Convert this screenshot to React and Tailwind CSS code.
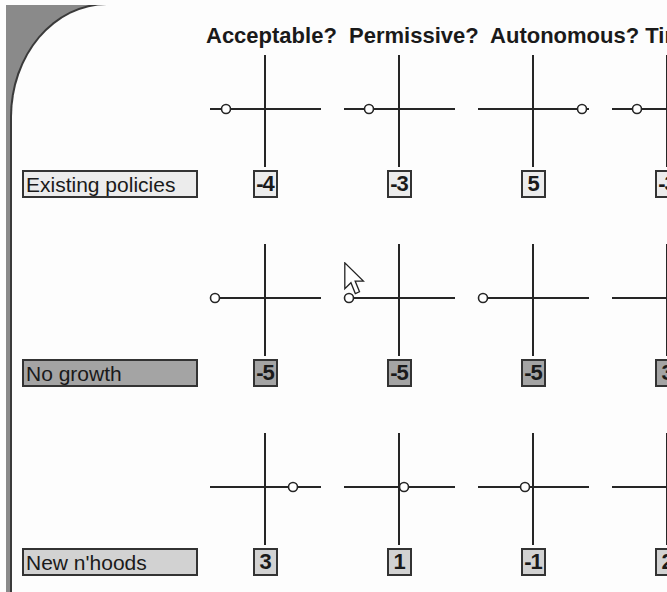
import React from "react";

const rows = [
  {
    label: "Existing policies",
    fill: "bg-[#ececec]",
    values: ["-4", "-3", "5", "-3"],
    dots: [-39, -30, 49, -30],
  },
  {
    label: "No growth",
    fill: "bg-[#a4a4a4]",
    values: ["-5", "-5", "-5", "3"],
    dots: [-50, -50, -50, 40],
  },
  {
    label: "New n'hoods",
    fill: "bg-[#d2d2d2]",
    values: ["3", "1", "-1", "2"],
    dots: [28, 5, -8, 30],
  },
];

function Cross({ dx }) {
  return (
    <svg width="134" height="112" viewBox="0 0 134 112">
      <line x1="67" y1="0" x2="67" y2="112" stroke="#262626" strokeWidth="2" />
      <line x1="12" y1="54" x2="123" y2="54" stroke="#262626" strokeWidth="2" />
      <circle cx={67 + dx} cy="54" r="4.5" fill="#fff" stroke="#262626" strokeWidth="1.6" />
    </svg>
  );
}

function Row({ row }) {
  return (
    <div className="flex items-start mb-[46px]">
      <div className="w-[186px] shrink-0 pl-[10px] pt-[115px]">
        <div
          className={`w-[176px] h-[28px] border-2 border-[#333] ${row.fill} flex items-center pl-[2px] text-[21px] leading-none text-[#1a1a1a]`}
        >
          {row.label}
        </div>
      </div>
      {row.values.map((v, i) => (
        <div key={i} className="w-[134px] shrink-0 flex flex-col items-center">
          <Cross dx={row.dots[i]} />
          <div
            className={`mt-[3px] w-[25px] h-[28px] border-2 border-[#333] ${row.fill} flex items-center justify-center text-[22px] font-bold leading-none tracking-[-1px] text-[#1a1a1a]`}
          >
            {v}
          </div>
        </div>
      ))}
    </div>
  );
}

export default function App() {
  return (
    <div
      className="relative w-[667px] h-[592px] overflow-hidden bg-[#fdfdfd] pl-[6px] pt-[5px]"
      style={{ fontFamily: '"Liberation Sans", Arial, sans-serif' }}
    >
      <div className="h-full bg-[#8a8a8a] pl-[6px] overflow-hidden">
        <div className="h-full bg-[#fdfdfd] rounded-tl-[95px_112px] ring-2 ring-[#3a3a3a] overflow-hidden pt-[20px]">
          <div className="h-[22px] pl-[194px] whitespace-pre text-[22px] leading-none font-bold text-[#1a1a1a]">
            Acceptable?  Permissive?  Autonomous? Timely?
          </div>
          <div className="pt-[8px]">
            {rows.map((row) => (
              <Row key={row.label} row={row} />
            ))}
          </div>
        </div>
      </div>

      {/* mouse pointer */}
      <svg
        className="absolute left-[344px] top-[262px]"
        width="21"
        height="34"
        viewBox="0 0 13 21"
      >
        <path
          d="M0.5 0.5 L0.5 16.5 L4.3 12.8 L7 19.5 L9.6 18.4 L6.9 11.8 L12 11.8 Z"
          fill="#fff"
          stroke="#222"
          strokeWidth="0.8"
          strokeLinejoin="miter"
        />
      </svg>
    </div>
  );
}
